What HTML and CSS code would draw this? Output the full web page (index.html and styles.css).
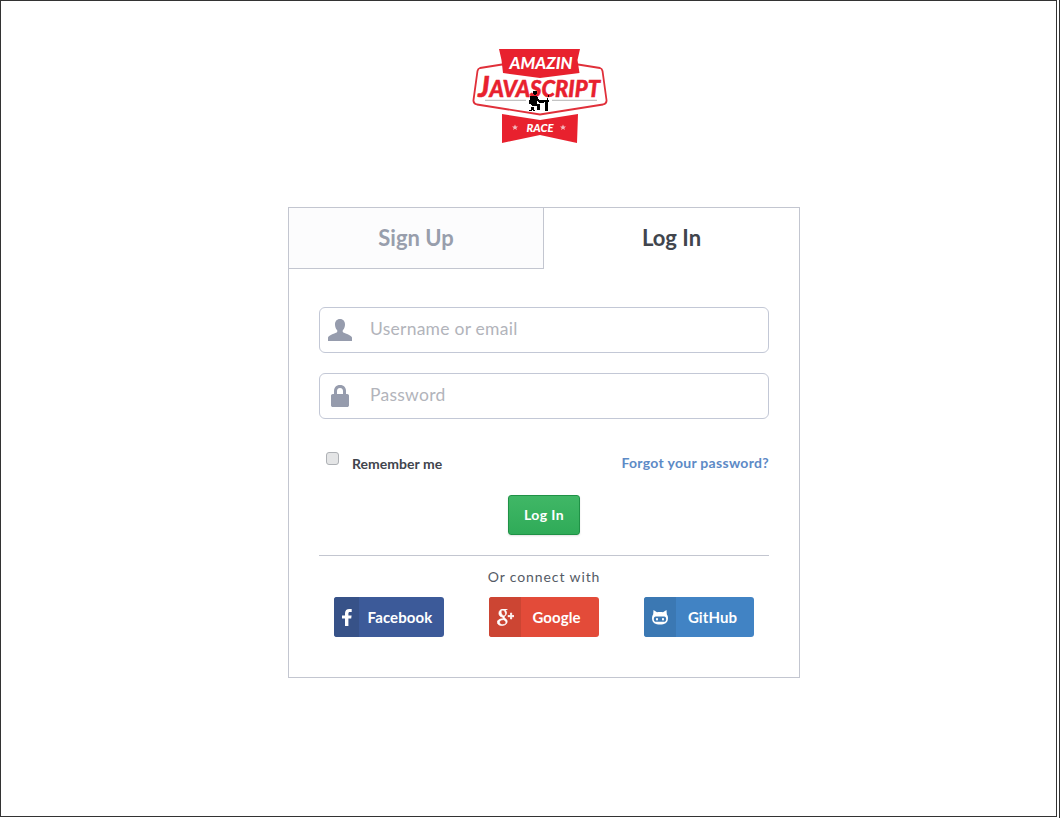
FILE: index.html
```html
<!DOCTYPE html>
<html lang="en">
<head>
<meta charset="utf-8">
<title>Amazin JavaScript Race</title>
<link rel="stylesheet" href="styles.css">
</head>
<body>
<div class="frame">
  <header class="logo-wrap">
    <svg class="logo" width="160" height="110" viewBox="0 0 160 110">
      <path class="plaque" d="M20 28L42 24.500H118L140 28Q142 28.500 142.500 31L146.500 60Q147 63.500 143 64.500L80 74.500L17 64.500Q13 63.500 13.500 60L17.500 31Q18 28.500 20 28Z"/>
      <path class="red" d="M39 9H120L117.500 20L119.500 33L80 38L43 33L41.500 20Z"/>
      <path class="red" d="M42 74L80 80L118 74L117 103L80 95L42 103Z"/>
      <text class="lg-amazin" x="81" y="29" textLength="63" lengthAdjust="spacingAndGlyphs">AMAZIN</text>
      <text class="lg-js" x="79" y="57" textLength="122" lengthAdjust="spacingAndGlyphs"><tspan class="lg-big">J</tspan>AVASCRIPT</text>
      <rect class="lg-line" x="25" y="59.800" width="41" height="1"/>
      <rect class="lg-line" x="92" y="59.800" width="45" height="1"/>
      <text class="lg-race" x="80" y="92" textLength="27" lengthAdjust="spacingAndGlyphs">RACE</text>
      <path class="lg-star" d="M55 84.500l.9 2h2.100l-1.700 1.400.6 2.100-1.900-1.200-1.900 1.200.6-2.100-1.700-1.400h2.100zM103 84.500l.9 2h2.100l-1.700 1.400.6 2.100-1.900-1.200-1.900 1.200.6-2.100-1.700-1.400h2.100z"/>
      <g class="lg-man">
        <circle cx="75" cy="52.800" r="2"/>
        <path d="M70 55.500h6l4 5h3.500v2h-5l-1.500-2v3h2.500v6h-2.200v-4h-5.300l-3-2z"/>
        <path d="M70.500 67h3v2l2 1.500-.6.800-2.400-1.200-2.400 1.200-.6-.8 2-1.500z"/>
        <path d="M79 60h10v1.500h-1.500v9.500h-3v-9.500H79z"/>
        <path d="M87 59.500l2-6 .6.200-1.800 5.800z"/>
      </g>
    </svg>
  </header>

  <main class="card">
    <nav class="tabs">
      <a class="tab tab-off">Sign Up</a>
      <a class="tab tab-on">Log In</a>
    </nav>
    <form class="form">
      <div class="field">
        <svg class="field-icon" width="24" height="22" viewBox="0 0 24 22">
          <path d="M12 0c3.300 0 5 2.400 5 5.500 0 2.200-.7 4.200-2 5.500-.5.600-.5 2 .3 2.600 1.300.9 7.700 2.300 8.700 4.900V22H0v-3.500c1-2.600 7.400-4 8.700-4.900.8-.6.800-2 .3-2.600C7.700 9.700 7 7.700 7 5.500 7 2.400 8.700 0 12 0z"/>
        </svg>
        <span class="placeholder">Username or email</span>
      </div>
      <div class="field">
        <svg class="field-icon" width="24" height="22" viewBox="0 0 24 22">
          <path d="M12 0c4 0 6 2.700 6 6v3h1.200c1 0 1.800.8 1.800 1.800v9.400c0 1-.8 1.800-1.800 1.800H4.800c-1 0-1.800-.8-1.800-1.800v-9.400C3 9.800 3.800 9 4.800 9H6V6c0-3.300 2-6 6-6zm0 3c-2.200 0-3 1.500-3 3v3h6V6c0-1.500-.8-3-3-3z"/>
        </svg>
        <span class="placeholder">Password</span>
      </div>
      <div class="options">
        <label class="remember"><span class="check"></span><span class="remember-text">Remember me</span></label>
        <a class="forgot">Forgot your password?</a>
      </div>
      <div class="submit-row"><button class="submit" type="button">Log In</button></div>
      <div class="connect">Or connect with</div>
      <div class="socials">
        <a class="social fb">
          <span class="social-icon"><svg width="10" height="17" viewBox="0 0 10 17"><path d="M3 17V9.500H0V6.500h3V4.300C3 1.500 4.700 0 7.200 0 8.400 0 9.400.1 9.700.1v2.800H8c-1.300 0-1.600.7-1.600 1.600v2h3.200l-.4 3H6.400V17z"/></svg></span>
          <span class="social-label">Facebook</span>
        </a>
        <a class="social gp">
          <span class="social-icon"><svg class="gp-glyph" width="17" height="17" viewBox="0 0 17 17"><path d="M6 0h4.500L9 1h-1c1 .7 1.500 1.700 1.500 3 0 1.200-.6 2-1.400 2.700-.6.500-.9.900-.9 1.400 0 .5.400.9 1 1.400 1.100.8 2 1.600 2 3.100 0 2.200-2 3.900-5.300 3.900C2 16.500.3 15.100.3 13.300c0-2 2.200-3.500 5.200-3.500l.9.100c-.3-.3-.6-.8-.6-1.200 0-.3.100-.5.200-.7h-.6C3.500 8 1.900 6.300 1.900 4.200 1.900 2 3.800 0 6 0zM5.900 1C4.600 1 4 2.200 4.200 3.600c.2 1.500 1.300 3.300 2.700 3.300 1.300 0 1.700-1.100 1.500-2.500C8.200 2.800 7.300 1 5.900 1zM6 10.700c-2 0-3.500 1.100-3.500 2.600s1.400 2.400 3.200 2.400c2 0 3.200-1 3.200-2.300 0-1.300-1-1.900-2.300-2.700zM13.500 4h1.200v2.500H17v1.200h-2.300V10h-1.200V7.700H11V6.500h2.500z"/></svg></span>
          <span class="social-label">Google</span>
        </a>
        <a class="social gh">
          <span class="social-icon"><svg width="16" height="15" viewBox="0 0 16 15"><path fill-rule="evenodd" d="M1.500 0L5 2.300C6.300 2 9.700 2 11 2.300L14.500 0l.3 4.200c.8 1 1.200 2.300 1.200 3.800 0 5-3.500 6.500-8 6.500S0 13 0 8c0-1.500.4-2.800 1.200-3.800zM3.800 6.500C2.500 6.500 1.800 7.800 1.800 9.200c0 1.500.8 2.600 2 2.600h8.400c1.200 0 2-1.100 2-2.600 0-1.400-.7-2.700-2-2.700zM5 8c.7 0 1 .6 1 1.200s-.3 1.300-1 1.300-1-.7-1-1.300S4.300 8 5 8zm6 0c.7 0 1 .6 1 1.200s-.3 1.300-1 1.300-1-.7-1-1.300.3-1.200 1-1.200z"/></svg></span>
          <span class="social-label">GitHub</span>
        </a>
      </div>
    </form>
  </main>
</div>
</body>
</html>
```
FILE: styles.css
```css
* { box-sizing: border-box; }
html, body { margin: 0; padding: 0; background: #fff; }
body {
  width: 1060px;
  height: 818px;
  overflow: hidden;
  border-right: 1px solid #333;
  font-family: Lato, "Liberation Sans", sans-serif;
  color: #41454d;
}

.frame {
  width: 1057px;
  height: 817px;
  border: 1px solid #333;
  background: #fff;
}

.logo-wrap { padding: 39px 0 0 459px; height: 206px; }
.logo { display: block; }
.red { fill: #e8212e; }
.plaque { fill: #fff; stroke: #e0303a; stroke-width: 1.800; }
.lg-amazin, .lg-race {
  fill: #fff;
  font: italic 900 16px Lato, sans-serif;
  text-anchor: middle;
}
.lg-race { font-size: 11px; }
.lg-js {
  fill: #e8212e;
  stroke: #e8212e;
  stroke-width: .5;
  font: italic 900 23px Lato, sans-serif;
  text-anchor: middle;
}
.lg-big { font-size: 29px; }
.lg-line { fill: #b5b5b5; }
.lg-star { fill: #f3b9bd; }
.lg-man { fill: #000; shape-rendering: crispEdges; }

.card {
  width: 512px;
  height: 471px;
  margin-left: 287px;
  border: 1px solid #c3c6d0;
  background: #fff;
}
.tabs { display: flex; height: 61px; }
.tab {
  flex: 1;
  display: flex;
  align-items: center;
  justify-content: center;
  padding-bottom: 2px;
  font-size: 22px;
  font-weight: 700;
}
.tab-off {
  flex: 0 0 255px;
  color: #989eac;
  background: #fcfcfd;
  border-right: 1px solid #c3c6d0;
  border-bottom: 1px solid #c3c6d0;
}
.tab-on { color: #41454d; }

.form { padding: 38px 30px 0; }
.field {
  display: flex;
  align-items: center;
  height: 46px;
  margin-bottom: 20px;
  padding-left: 8px;
  border: 1px solid #c3c8d6;
  border-radius: 6px;
}
.field-icon { flex: none; fill: #969cad; margin-right: 18px; margin-top: -1px; }
.placeholder { margin-top: -3px; font-size: 17.500px; color: #b2b4bb; letter-spacing: .25px; }

.options {
  display: flex;
  justify-content: space-between;
  align-items: flex-start;
  height: 56px;
  padding-top: 13px;
}
.remember { display: flex; align-items: flex-start; }
.check {
  width: 13px;
  height: 13px;
  margin: 0 13px 0 7px;
  border: 1px solid #aeb1b5;
  border-radius: 3px;
  background: #e4e5e6;
}
.remember-text { font-size: 14px; font-weight: 700; color: #41454d; line-height: 17px; margin-top: 3px; letter-spacing: .03px; }
.forgot { font-size: 14px; font-weight: 700; color: #5d8ac6; line-height: 17px; margin-top: 2px; letter-spacing: .3px; }

.submit-row {
  display: flex;
  justify-content: center;
  height: 61px;
  border-bottom: 1px solid #c3c6d0;
}
.submit {
  width: 72px;
  height: 40px;
  padding: 0 0 2px;
  border: 1px solid #1f9146;
  border-radius: 3px;
  background: linear-gradient(#40b766, #2fab58);
  box-shadow: 0 1px 2px rgba(0, 0, 0, .12);
  color: #fff;
  font: 700 14px Lato, sans-serif;
  letter-spacing: .4px;
}

.connect { margin-top: 12px; text-align: center; font-size: 14px; line-height: 18px; letter-spacing: .9px; color: #555b66; }
.socials { display: flex; justify-content: center; gap: 45px; margin-top: 11px; }
.social {
  display: flex;
  width: 110px;
  height: 40px;
  border-radius: 3px;
  overflow: hidden;
  color: #fff;
  font-size: 15px;
  font-weight: 700;
  letter-spacing: .1px;
}
.social-icon { display: flex; flex: 0 0 32px; align-items: center; justify-content: center; fill: #fff; }
.gp-glyph { stroke: #fff; stroke-width: .7; }
.social-label { flex: 1; display: flex; align-items: center; justify-content: center; }
.fb { background: #3c5a99; }
.fb .social-icon { flex-basis: 25px; background: #375288; }
.fb .social-label { padding-right: 3px; }
.gp { background: #e34b39; }
.gp .social-icon { background: #cc4533; }
.gp .social-label { padding-right: 7px; }
.gh { background: #4183c4; }
.gh .social-icon { background: #3b78b3; }
.gh .social-label { padding-right: 5px; }
```
